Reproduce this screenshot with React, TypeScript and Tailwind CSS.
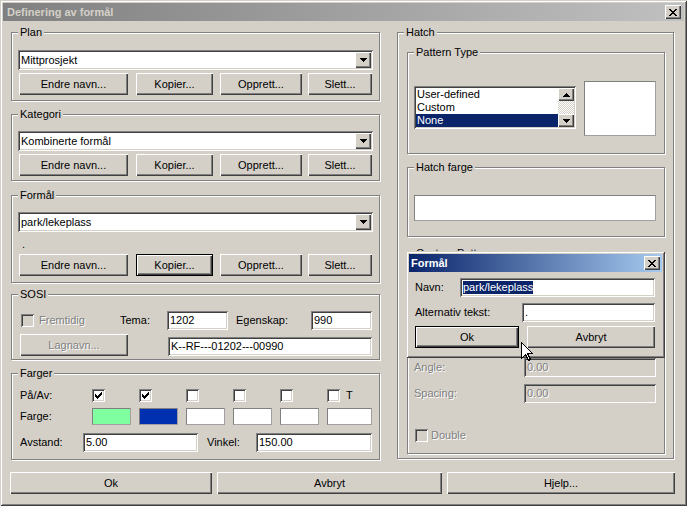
import React from 'react';

const raised = 'shadow-[inset_1px_1px_#ffffff,inset_-1px_-1px_#404040,inset_-2px_-2px_#808080]';
const sunken = 'shadow-[inset_1px_1px_#808080,inset_-1px_-1px_#ffffff,inset_2px_2px_#404040,inset_-2px_-2px_#d4d0c8]';
const frame = 'shadow-[inset_1px_1px_#d4d0c8,inset_-1px_-1px_#404040,inset_2px_2px_#ffffff,inset_-2px_-2px_#808080]';
const etched = 'text-[#808080] [text-shadow:1px_1px_0_#ffffff]';

// small pixel glyphs
const Pix: React.FC<{ rows: string[]; color?: string }> = ({ rows, color = '#000' }) => (
  <svg width={rows[0].length} height={rows.length} shapeRendering="crispEdges">
    {rows.map((r, y) =>
      r.split('').map((c, x) => (c === 'X' ? <rect key={`${x}-${y}`} x={x} y={y} width={1} height={1} fill={color} /> : null))
    )}
  </svg>
);

const CLOSE = ['XX....XX', '.XX..XX.', '..XXXX..', '...XX...', '..XXXX..', '.XX..XX.', 'XX....XX'];
const CHECK = ['......X', '.....XX', 'X...XXX', 'XX.XXX.', 'XXXXX..', '.XXX...', '..X....'];
const DOWN = ['XXXXXXX', '.XXXXX.', '..XXX..', '...X...'];
const UP = ['...X...', '..XXX..', '.XXXXX.', 'XXXXXXX'];

const Btn: React.FC<{ children: React.ReactNode; className?: string; isDefault?: boolean; disabled?: boolean }> = ({
  children,
  className = '',
  isDefault = false,
  disabled = false,
}) => (
  <div
    className={`h-[22px] flex items-center justify-center bg-[#d4d0c8] ${raised} ${isDefault ? 'border border-black' : ''} ${
      disabled ? etched : ''
    } ${className}`}
  >
    {children}
  </div>
);

const Edit: React.FC<{ children?: React.ReactNode; className?: string; disabled?: boolean }> = ({ children, className = '', disabled }) => (
  <div className={`h-[19px] flex items-center px-[3px] ${sunken} ${disabled ? `bg-[#d4d0c8] ${etched}` : 'bg-white'} ${className}`}>{children}</div>
);

const Combo: React.FC<{ text: string; className?: string }> = ({ text, className = '' }) => (
  <div className={`h-[20px] flex items-stretch p-[2px] bg-white ${sunken} ${className}`}>
    <span className="flex-1 flex items-center pl-[1px]">{text}</span>
    <div className={`w-[16px] flex items-center justify-center bg-[#d4d0c8] ${raised}`}>
      <Pix rows={DOWN} />
    </div>
  </div>
);

const Check: React.FC<{ checked?: boolean; disabled?: boolean; className?: string }> = ({ checked, disabled, className = '' }) => (
  <div className={`w-[13px] h-[13px] flex items-center justify-center shrink-0 ${sunken} ${disabled ? 'bg-[#d4d0c8]' : 'bg-white'} ${className}`}>
    {checked && <Pix rows={CHECK} />}
  </div>
);

const Group: React.FC<{ title: string; className?: string; children?: React.ReactNode }> = ({ title, className = '', children }) => (
  <div className={`flex flex-col border border-[#808080] shadow-[inset_1px_1px_#ffffff,1px_1px_#ffffff] ${className}`}>
    <span className="-mt-[7px] ml-[6px] self-start px-[2px] bg-[#d4d0c8] leading-[13px]">{title}</span>
    {children}
  </div>
);

const ButtonRow: React.FC<{ defaultCopy?: boolean }> = ({ defaultCopy }) => (
  <div className="flex mt-[3px] ml-[7px]">
    <Btn className="w-[109px]">Endre navn...</Btn>
    <Btn className="w-[77px] ml-[8px]" isDefault={defaultCopy}>Kopier...</Btn>
    <Btn className="w-[82px] ml-[7px]">Opprett...</Btn>
    <Btn className="w-[64px] ml-[6px]">Slett...</Btn>
  </div>
);

const Swatch: React.FC<{ className?: string }> = ({ className = '' }) => (
  <div className={`h-[17px] border border-[#a0a0a0] border-t-[#808080] border-l-[#808080] ${className}`} />
);

export default function App() {
  return (
    <div className={`relative w-[687px] h-[506px] bg-[#d4d0c8] p-[3px] flex flex-col text-[11px] leading-[13px] text-black font-['Liberation_Sans',Arial,sans-serif] ${frame}`}>
      {/* title bar */}
      <div className="h-[18px] flex items-center justify-between pl-[4px] bg-[linear-gradient(to_right,#808080,#c0c0c0)]">
        <span className="font-bold text-[#d4d0c8]">Definering av formål</span>
        <div className={`w-[16px] h-[14px] mr-[3px] flex items-center justify-center bg-[#d4d0c8] ${raised}`}>
          <Pix rows={CLOSE} />
        </div>
      </div>

      <div className="flex pl-[8px]">
        {/* left column */}
        <div className="w-[369px] flex flex-col">
          <Group title="Plan" className="mt-[11px] h-[69px]">
            <Combo text="Mittprosjekt" className="mt-[11px] mx-[6px]" />
            <ButtonRow />
          </Group>

          <Group title="Kategori" className="mt-[13px] h-[67px]">
            <Combo text="Kombinerte formål" className="mt-[10px] mx-[6px]" />
            <ButtonRow />
          </Group>

          <Group title="Formål" className="mt-[14px] h-[88px]">
            <Combo text="park/lekeplass" className="mt-[10px] mx-[6px]" />
            <div className="mt-[6px] ml-[10px] h-[13px]">.</div>
            <ButtonRow defaultCopy />
          </Group>

          <Group title="SOSI" className="mt-[11px] h-[66px]">
            <div className="flex items-center h-[19px] mt-[10px] ml-[9px]">
              <div className="w-[99px] flex items-center">
                <Check disabled />
                <span className={`ml-[5px] ${etched}`}>Fremtidig</span>
              </div>
              <span className="w-[47px]">Tema:</span>
              <Edit className="w-[61px]">1202</Edit>
              <span className="w-[75px] ml-[8px]">Egenskap:</span>
              <Edit className="w-[61px]">990</Edit>
            </div>
            <div className="flex items-start mt-[4px] ml-[8px]">
              <Btn className="w-[108px]" disabled>Lagnavn...</Btn>
              <Edit className="w-[204px] ml-[40px] mt-[3px]">K--RF---01202---00990</Edit>
            </div>
          </Group>

          <Group title="Farger" className="mt-[13px] h-[87px]">
            <div className="flex items-center h-[13px] mt-[9px] ml-[8px]">
              <span className="w-[72px]">På/Av:</span>
              <div className="w-[47px]"><Check checked /></div>
              <div className="w-[47px]"><Check checked /></div>
              <div className="w-[47px]"><Check /></div>
              <div className="w-[47px]"><Check /></div>
              <div className="w-[47px]"><Check /></div>
              <div className="flex items-center">
                <Check />
                <span className="ml-[6px]">T</span>
              </div>
            </div>
            <div className="flex items-center h-[17px] mt-[6px] ml-[8px]">
              <span className="w-[72px]">Farge:</span>
              <div className="w-[47px]"><Swatch className="w-[39px] bg-[#80ffa0]" /></div>
              <div className="w-[47px]"><Swatch className="w-[39px] bg-[#0030b0] border-[#002080]" /></div>
              <div className="w-[47px]"><Swatch className="w-[39px] bg-white" /></div>
              <div className="w-[47px]"><Swatch className="w-[39px] bg-white" /></div>
              <div className="w-[47px]"><Swatch className="w-[39px] bg-white" /></div>
              <Swatch className="w-[45px] bg-white" />
            </div>
            <div className="flex items-center h-[19px] mt-[8px] ml-[8px]">
              <span className="w-[63px]">Avstand:</span>
              <Edit className="w-[115px]">5.00</Edit>
              <span className="w-[49px] ml-[9px]">Vinkel:</span>
              <Edit className="w-[116px]">150.00</Edit>
            </div>
          </Group>
        </div>

        {/* right column */}
        <Group title="Hatch" className="ml-[17px] mt-[11px] w-[277px] h-[427px]">
          <Group title="Pattern Type" className="ml-[9px] mt-[13px] w-[258px] h-[102px]">
            <div className="flex items-start mt-[22px] ml-[6px]">
              <div className={`w-[162px] h-[43px] mt-[5px] p-[2px] flex bg-white ${sunken}`}>
                <div className="flex-1 flex flex-col">
                  <div className="h-[13px] pl-[1px]">User-defined</div>
                  <div className="h-[13px] pl-[1px]">Custom</div>
                  <div className="h-[13px] pl-[1px] bg-[#0a246a] text-white">None</div>
                </div>
                <div className="w-[16px] flex flex-col">
                  <div className={`h-[13px] flex items-center justify-center bg-[#d4d0c8] ${raised}`}>
                    <Pix rows={UP} />
                  </div>
                  <div className="flex-1 bg-[repeating-conic-gradient(#ffffff_0_25%,#d4d0c8_0_50%)] bg-[length:2px_2px]" />
                  <div className={`h-[13px] flex items-center justify-center bg-[#d4d0c8] ${raised}`}>
                    <Pix rows={DOWN} />
                  </div>
                </div>
              </div>
              <div className="w-[72px] h-[55px] ml-[8px] bg-white border border-[#808080] border-b-[#a0a0a0] border-r-[#a0a0a0]" />
            </div>
          </Group>

          <Group title="Hatch farge" className="ml-[9px] mt-[13px] w-[258px] h-[70px]">
            <div className="w-[242px] h-[26px] mt-[21px] ml-[6px] bg-white border border-[#808080] border-b-[#a0a0a0] border-r-[#a0a0a0]" />
          </Group>

          <Group title="Custom Pattern" className="ml-[9px] mt-[16px] w-[258px] h-[201px]">
            <div className="flex items-center h-[18px] mt-[98px] ml-[6px]">
              <span className={`w-[110px] ${etched}`}>Angle:</span>
              <Edit className="w-[132px] h-[18px]" disabled>0.00</Edit>
            </div>
            <div className="flex items-center h-[19px] mt-[8px] ml-[6px]">
              <span className={`w-[110px] ${etched}`}>Spacing:</span>
              <Edit className="w-[132px]" disabled>0.00</Edit>
            </div>
            <div className="flex items-center h-[13px] mt-[26px] ml-[7px]">
              <Check disabled />
              <span className={`ml-[3px] ${etched}`}>Double</span>
            </div>
          </Group>
        </Group>
      </div>

      {/* bottom buttons */}
      <div className="flex mt-[12px] pl-[7px]">
        <Btn className="w-[202px]">Ok</Btn>
        <Btn className="w-[225px] ml-[5px]">Avbryt</Btn>
        <Btn className="w-[228px] ml-[5px]">Hjelp...</Btn>
      </div>

      {/* child dialog over the hatch panel */}
      <div className={`absolute left-[406px] top-[251px] w-[259px] h-[107px] bg-[#d4d0c8] px-[3px] pt-[3px] flex flex-col ${frame}`}>
        <div className="h-[18px] flex items-center justify-between pl-[2px] bg-[linear-gradient(to_right,#0a246a,#a6caf0)]">
          <span className="font-bold text-white">Formål</span>
          <div className={`w-[16px] h-[14px] mr-[2px] flex items-center justify-center bg-[#d4d0c8] ${raised}`}>
            <Pix rows={CLOSE} />
          </div>
        </div>
        <div className="flex items-center h-[19px] mt-[6px] ml-[6px]">
          <span className="w-[45px]">Navn:</span>
          <Edit className="w-[195px] px-[2px]">
            <span className="bg-[#0a246a] text-white">park/lekeplass</span>
          </Edit>
        </div>
        <div className="flex items-center h-[19px] mt-[6px] ml-[6px]">
          <span className="w-[107px]">Alternativ tekst:</span>
          <Edit className="w-[133px]">.</Edit>
        </div>
        <div className="flex mt-[4px] ml-[6px]">
          <Btn className="w-[104px]" isDefault>Ok</Btn>
          <Btn className="w-[128px] ml-[8px]">Avbryt</Btn>
        </div>
      </div>

      {/* mouse pointer */}
      <svg className="absolute left-[521px] top-[342px]" width="12" height="19" viewBox="0 0 12 19" shapeRendering="crispEdges">
        <path d="M0.5 0.5 L0.5 16.5 L4.5 12.5 L7.5 18.5 L9.5 17.5 L6.5 11.5 L11.5 11.5 Z" fill="#fff" stroke="#000" strokeWidth="1" />
      </svg>
    </div>
  );
}
